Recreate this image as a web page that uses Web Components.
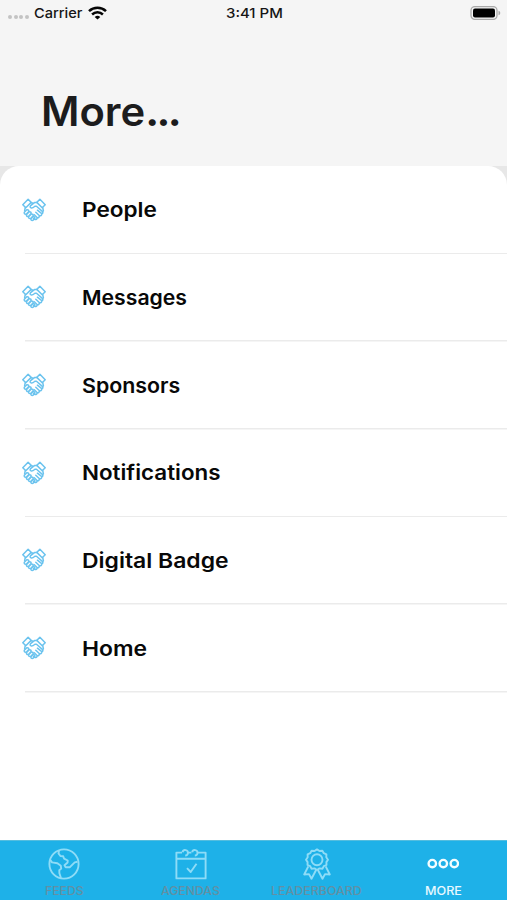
<!DOCTYPE html>
<html lang="en">
<head>
<meta charset="utf-8">
<title>More</title>
<style>html,body{margin:0;height:100%;overflow:hidden}</style>
</head>
<body>
<more-screen></more-screen>
<script>
function define(name, html, ready) {
  const tpl = document.createElement('template');
  tpl.innerHTML = html;
  customElements.define(name, class extends HTMLElement {
    connectedCallback() {
      if (this.shadowRoot) return;
      this.attachShadow({mode: 'open'}).append(tpl.content.cloneNode(true));
      if (ready) ready(this, this.shadowRoot);
    }
  });
}

/* Label whose glyphs are stretched horizontally to a given width */
define('fit-label', `<style>
  :host{display:inline-block;white-space:nowrap}
  span{display:inline-block;transform-origin:0 50%}
</style><span><slot></slot></span>`, (el, root) => {
  const span = root.querySelector('span');
  const w = +el.getAttribute('width');
  el.style.width = w + 'px';
  span.style.transform = 'scaleX(' + w / span.offsetWidth + ')';
});

define('status-bar', `<style>
  :host{display:grid;grid-template-columns:1fr auto 1fr;align-items:center;height:26px;padding:0 6px 0 8px;box-sizing:border-box;font:500 13.4px/26px Inter,"Liberation Sans",sans-serif;color:#161616}
  .left{display:flex;align-items:center}
  .dots{display:flex;gap:1.6px;margin:8px 5px 0 0}
  .dots i{width:4px;height:4px;border-radius:50%;background:#c3c3c3}
  svg{display:block}
  .wifi{margin-left:5px}
  .bat{justify-self:end}
</style>
<div class="left"><div class="dots"><i></i><i></i><i></i><i></i></div><fit-label width="49">Carrier</fit-label>
<svg class="wifi" width="19" height="14" viewBox="0 0 19 14" fill="none" stroke="#050505" stroke-width="2.5"><path d="M1 5.2a12.3 12.3 0 0 1 17 0M4.1 8.5a7.8 7.8 0 0 1 10.8 0"/><path d="M9.5 13.6 6.7 10.9a4.2 4.2 0 0 1 5.6 0z" fill="#050505" stroke="none"/></svg></div>
<fit-label width="57">3:41 PM</fit-label>
<svg class="bat" width="31" height="14" viewBox="0 0 31 14"><rect x="1" y=".7" width="26" height="12.6" rx="3.8" fill="#f5f5f5" stroke="#a9a9a9" stroke-width="1.3"/><rect x="3" y="2.6" width="22" height="8.8" rx="2" fill="#000"/><path d="M28.5 4.8q1.8.5 1.8 2.2t-1.8 2.2z" fill="#a9a9a9"/></svg>`);

define('hand-shake', `<style>:host{display:block;width:24px;height:24px}svg{display:block}</style>
<svg width="24" height="24" viewBox="0 0 24 24" fill="none" stroke="#6bc3ee" stroke-width="1.5" stroke-linejoin="round" stroke-linecap="round">
<path d="M.8 6.8 6.1 1.3 9.2 4.4 3.8 9.8zM23.2 6.8 17.9 1.3 14.8 4.4 20.2 9.8z"/>
<path d="M8.9 4.7 10.7 5.1M15 4.6 12.8 4.4 8.6 7.6Q7.3 9.5 9.3 10 10.7 10.2 12.9 8.2L14.5 8.3 20.6 13.6Q21.4 15.3 19.8 15.7L15.4 12.2M19.8 15.7Q19.8 18 17.5 17.7L13.8 14.3M17.5 17.7Q17.2 20 15.3 19.7L12.3 16.7M15.3 19.7Q14.7 22.2 12.6 21.4L11.4 20.2"/>
<path d="M3.2 9.8 2.6 12.8M20.8 9.8 21.4 13"/>
<path d="M2.3 14.2 4.8 11.8Q6.9 11.5 6.8 13.6L4.2 16.2Q1.8 16.5 2.3 14.2zM4.4 16.6 7.2 13.8Q9.3 13.6 9.1 15.6L6.4 18.4Q4.2 18.8 4.4 16.6zM6.6 18.8 9.4 16Q11.4 15.8 11.2 17.8L8.7 20.4Q6.3 20.9 6.6 18.8zM8.9 20.8 11.2 18.5Q13.1 18.6 12.8 20.4L11 22.3Q8.7 22.8 8.9 20.8z"/>
</svg>`);

define('menu-row', `<style>
  :host{display:flex;align-items:center;height:87.7px;padding-left:22px;box-sizing:border-box;background:linear-gradient(#ebebeb,#ebebeb) 25px 100%/100% 1.5px no-repeat;font:600 20.6px/30px Inter,"Liberation Sans",sans-serif;color:#080808}
  hand-shake{margin:0 36px 1.5px 0;flex:none}
</style><hand-shake></hand-shake><slot></slot>`);

const icons = {
  globe: '<circle cx="16" cy="16" r="14.6"/><path d="M11 2.6 10.5 5.4 12.4 8 15.2 8.3 16.1 10.7 19.7 12.5 19.6 14.5 16.5 17.2 17.7 19.3 21.9 19.2 26.7 14.4 29.4 13.8M2 11.5 4 14.4 9.4 15.2 12.8 17.8 13.2 20.6 11.3 22.3 11.4 25.2 13 30"/>',
  calendar: '<path d="M7 4.6H1.4V30.4H30.6V4.6H22.6M12.8 4.6H16.4M1.4 10.8H30.6M12 20.2 15.7 24 21.5 15.7"/><path d="M7.6 4.2a2.7 2.7 0 1 1 2.6 3.3M17.2 4.2a2.7 2.7 0 1 1 2.6 3.3"/>',
  medal: '<path d="M16 1.4 18.5 3 21.4 2.7 22.8 5.2 25.4 6.4 25.3 9.3 27 11.7 25.4 14.1 25.5 17 22.8 18.2 21.4 20.7 18.5 20.4 16 22 13.5 20.4 10.6 20.7 9.2 18.2 6.5 17 6.6 14.1 5 11.7 6.7 9.3 6.6 6.4 9.2 5.2 10.6 2.7 13.5 3z"/><circle cx="16" cy="11.7" r="5.5"/><path d="M7.3 18.4 3.2 26.5 8 26.1 10.5 30.7 15.1 22M24.7 18.4 28.8 26.5 24 26.1 21.5 30.7 16.9 22"/>',
  more: '<g stroke-width="2.4"><circle cx="5.3" cy="15.6" r="3.7"/><circle cx="16.3" cy="15.6" r="3.7"/><circle cx="27.3" cy="15.6" r="3.7"/></g>'
};
define('tab-item', `<style>
  :host{display:flex;flex-direction:column;align-items:center;padding-top:7px;flex:none;width:126.4px;color:#6290a4;font:500 11.6px/16px Inter,"Liberation Sans",sans-serif;--ink:#8edcf7}
  :host([active]){color:#e9f9ff;--ink:#f3fdff}
  svg{display:block;margin-bottom:3px;stroke:var(--ink)}
</style><svg width="32" height="32" viewBox="0 0 32 32" fill="none" stroke-width="1.9" stroke-linejoin="round"></svg><slot></slot>`,
(el, root) => { root.querySelector('svg').innerHTML = icons[el.getAttribute('icon')]; });

define('tab-bar', `<style>:host{display:flex;height:60px;padding-left:1px;background:#1eb1e8;border-top:1px solid #54bddf;box-sizing:border-box}</style>
<tab-item icon="globe"><fit-label width="39">FEEDS</fit-label></tab-item>
<tab-item icon="calendar"><fit-label width="59">AGENDAS</fit-label></tab-item>
<tab-item icon="medal"><fit-label width="91">LEADERBOARD</fit-label></tab-item>
<tab-item icon="more" active><fit-label width="37">MORE</fit-label></tab-item>`);

define('more-screen', `<style>
  :host{display:flex;flex-direction:column;width:507px;height:900px;background:#f5f5f5;overflow:hidden}
  header{height:140px;padding:58px 0 0 41px;box-sizing:border-box;font:600 40.5px/56px Inter,"Liberation Sans",sans-serif;color:#1c1c1d;white-space:nowrap}
  .tail{font-weight:700;letter-spacing:-2.6px}
  .back{flex:1;background:#e7e7e7}
  main{height:100%;padding-top:.5px;box-sizing:border-box;background:#fff;border-radius:19px 19px 0 0}
</style>
<status-bar></status-bar>
<header><fit-label width="138">More<span class="tail">...</span></fit-label></header>
<div class="back"><main>
<menu-row><fit-label width="74.5">People</fit-label></menu-row>
<menu-row><fit-label width="105">Messages</fit-label></menu-row>
<menu-row><fit-label width="98.5">Sponsors</fit-label></menu-row>
<menu-row><fit-label width="138">Notifications</fit-label></menu-row>
<menu-row><fit-label width="147">Digital Badge</fit-label></menu-row>
<menu-row><fit-label width="65.5">Home</fit-label></menu-row>
</main></div>
<tab-bar></tab-bar>`);
</script>
</body>
</html>
